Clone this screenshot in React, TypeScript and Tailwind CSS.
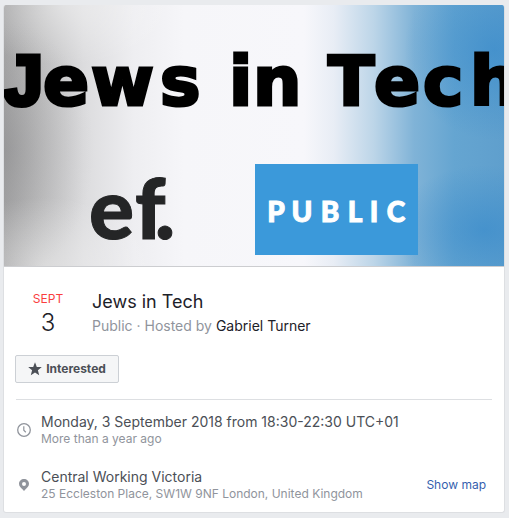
function CoverArt() {
  return (
    <svg
      className="block w-full"
      viewBox="0 0 500 261"
      role="img"
      aria-label="Jews in Tech cover, ef. and PUBLIC"
    >
      <defs>
        <linearGradient id="sweep" x1="0" x2="1" y1="0" y2="0">
          <stop offset="0" stopColor="#a4a4a5" />
          <stop offset="0.08" stopColor="#c2c2c3" />
          <stop offset="0.16" stopColor="#dcdcde" />
          <stop offset="0.26" stopColor="#eeeef1" />
          <stop offset="0.36" stopColor="#f6f6f9" />
          <stop offset="0.6" stopColor="#f7f7fb" />
          <stop offset="0.66" stopColor="#e8edf5" />
          <stop offset="0.74" stopColor="#bcd5e8" />
          <stop offset="0.82" stopColor="#80b3d7" />
          <stop offset="0.9" stopColor="#65a5d1" />
          <stop offset="1" stopColor="#5f9fcd" />
        </linearGradient>
        <radialGradient id="light">
          <stop offset="0" stopColor="#ffffff" stopOpacity="0.4" />
          <stop offset="1" stopColor="#ffffff" stopOpacity="0" />
        </radialGradient>
        <radialGradient id="shade">
          <stop offset="0" stopColor="#808082" stopOpacity="0.35" />
          <stop offset="1" stopColor="#9a9a9c" stopOpacity="0" />
        </radialGradient>
        <radialGradient id="blue">
          <stop offset="0" stopColor="#3388cb" stopOpacity="0.6" />
          <stop offset="1" stopColor="#3388cb" stopOpacity="0" />
        </radialGradient>
      </defs>
      <rect width="500" height="261" fill="url(#sweep)" />
      <ellipse cx="0" cy="145" rx="90" ry="130" fill="url(#shade)" />
      <ellipse cx="40" cy="262" rx="110" ry="70" fill="url(#light)" />
      <ellipse cx="60" cy="0" rx="110" ry="60" fill="url(#light)" />
      <ellipse cx="490" cy="45" rx="90" ry="90" fill="url(#blue)" />
      <ellipse cx="480" cy="225" rx="90" ry="65" fill="url(#blue)" />
      <g
        className="font-['DejaVu_Sans',sans-serif] text-[68px] font-bold"
        fill="#000000"
        stroke="#000000"
        strokeWidth="3"
      >
        <text x="0 39 87 156" y="100">
          <tspan className="font-['Liberation_Sans',sans-serif] text-[70px]" strokeWidth="5">J</tspan>
          <tspan>ews</tspan>
        </text>
        <text x="225 249" y="100">in</text>
        <text x="324 370 419 466" y="100">Tech</text>
      </g>
      <g
        className="font-['Lato',sans-serif] text-[84px] font-black"
        fill="#242526"
        stroke="#242526"
        strokeWidth="1"
      >
        <text x="85 131 151" y="234">ef.</text>
      </g>
      <rect x="251" y="159" width="163" height="91" fill="#3b99da" />
      <g
        className="font-['Lato',sans-serif] text-[28px] font-black"
        fill="#ffffff"
        stroke="#ffffff"
        strokeWidth="1"
        textAnchor="middle"
      >
        <text x="272" y="217">P</text>
        <text x="298" y="217">U</text>
        <text x="326" y="217">B</text>
        <text x="351" y="217">L</text>
        <text x="370" y="217">I</text>
        <text x="392" y="217">C</text>
      </g>
    </svg>
  );
}

function StarIcon() {
  return (
    <svg className="size-3.5" viewBox="0 0 14 14" fill="#4b4f56" aria-hidden="true">
      <path d="M7 0.2 8.8 4.9 13.8 5.1 9.9 8.2 11.2 13.2 7 10.4 2.8 13.2 4.1 8.2 0.2 5.1 5.2 4.9Z" />
    </svg>
  );
}

function ClockIcon() {
  return (
    <svg className="size-4 shrink-0" viewBox="0 0 16 16" fill="none" stroke="#90949c" aria-hidden="true">
      <circle cx="8" cy="8" r="6.3" strokeWidth="1.3" />
      <path d="M7.8 4.3V8.3L9.8 10.2" strokeWidth="1.2" />
    </svg>
  );
}

function PinIcon() {
  return (
    <svg className="size-4 shrink-0" viewBox="0 0 16 16" fill="#90949c" aria-hidden="true">
      <path
        fillRule="evenodd"
        d="M8 2C5.2 2 3 4.1 3 6.8 3 9.2 4.8 10.8 6.2 12L8 14 9.8 12C11.2 10.8 13 9.2 13 6.8 13 4.1 10.8 2 8 2ZM8 5.1A2 2 0 1 1 8 9.1 2 2 0 1 1 8 5.1Z"
      />
    </svg>
  );
}

export default function App() {
  return (
    <main className="bg-[#e9ebee] pt-[5px] pr-1 pb-1.5 pl-[3px] font-['Inter','Liberation_Sans',sans-serif]">
      <article className="overflow-hidden rounded-[3px] border border-t-0 border-[#dddfe2] bg-white">
        <div className="border-b border-[#cccdd0]">
          <CoverArt />
        </div>

        <header className="flex pt-[23px]">
          <time dateTime="2018-09-03" className="w-[88px] shrink-0 text-center">
            <span className="block text-xs leading-[18px] text-[#fa3e3e]">SEPT</span>
            <span className="block text-2xl leading-[30px] font-light text-[#1d2129]">3</span>
          </time>
          <div>
            <h1 className="text-lg leading-6 text-[#1d2129]">Jews in Tech</h1>
            <p className="pt-[3px] text-sm leading-[18px] text-[#90949c]">
              Public · Hosted by{" "}
              <a href="#host" className="text-[#1d2129]">Gabriel Turner</a>
            </p>
          </div>
        </header>

        <div className="px-[11px] pt-[17px]">
          <button
            type="button"
            className="flex h-7 w-[104px] items-center justify-center gap-1 rounded-[2px] border border-[#ccd0d5] bg-[#f5f6f7] text-xs font-bold text-[#4b4f56]"
          >
            <StarIcon />
            Interested
          </button>
        </div>

        <section className="mx-3 mt-4 border-t border-[#dddfe2] pt-[13px] pb-2.5">
          <div className="flex items-center gap-[9px]">
            <ClockIcon />
            <div>
              <p className="text-sm leading-[18px] text-[#4b4f56]">Monday, 3 September 2018 from 18:30-22:30 UTC+01</p>
              <p className="text-xs leading-4 text-[#90949c]">More than a year ago</p>
            </div>
          </div>
          <div className="mt-[21px] flex items-center gap-[9px]">
            <PinIcon />
            <div className="min-w-0 flex-1">
              <p className="text-sm leading-[18px] text-[#4b4f56]">Central Working Victoria</p>
              <p className="text-xs leading-4 text-[#90949c]">25 Eccleston Place, SW1W 9NF London, United Kingdom</p>
            </div>
            <a href="#map" className="mr-1.5 shrink-0 text-xs text-[#365fae]">Show map</a>
          </div>
        </section>
      </article>
    </main>
  );
}
